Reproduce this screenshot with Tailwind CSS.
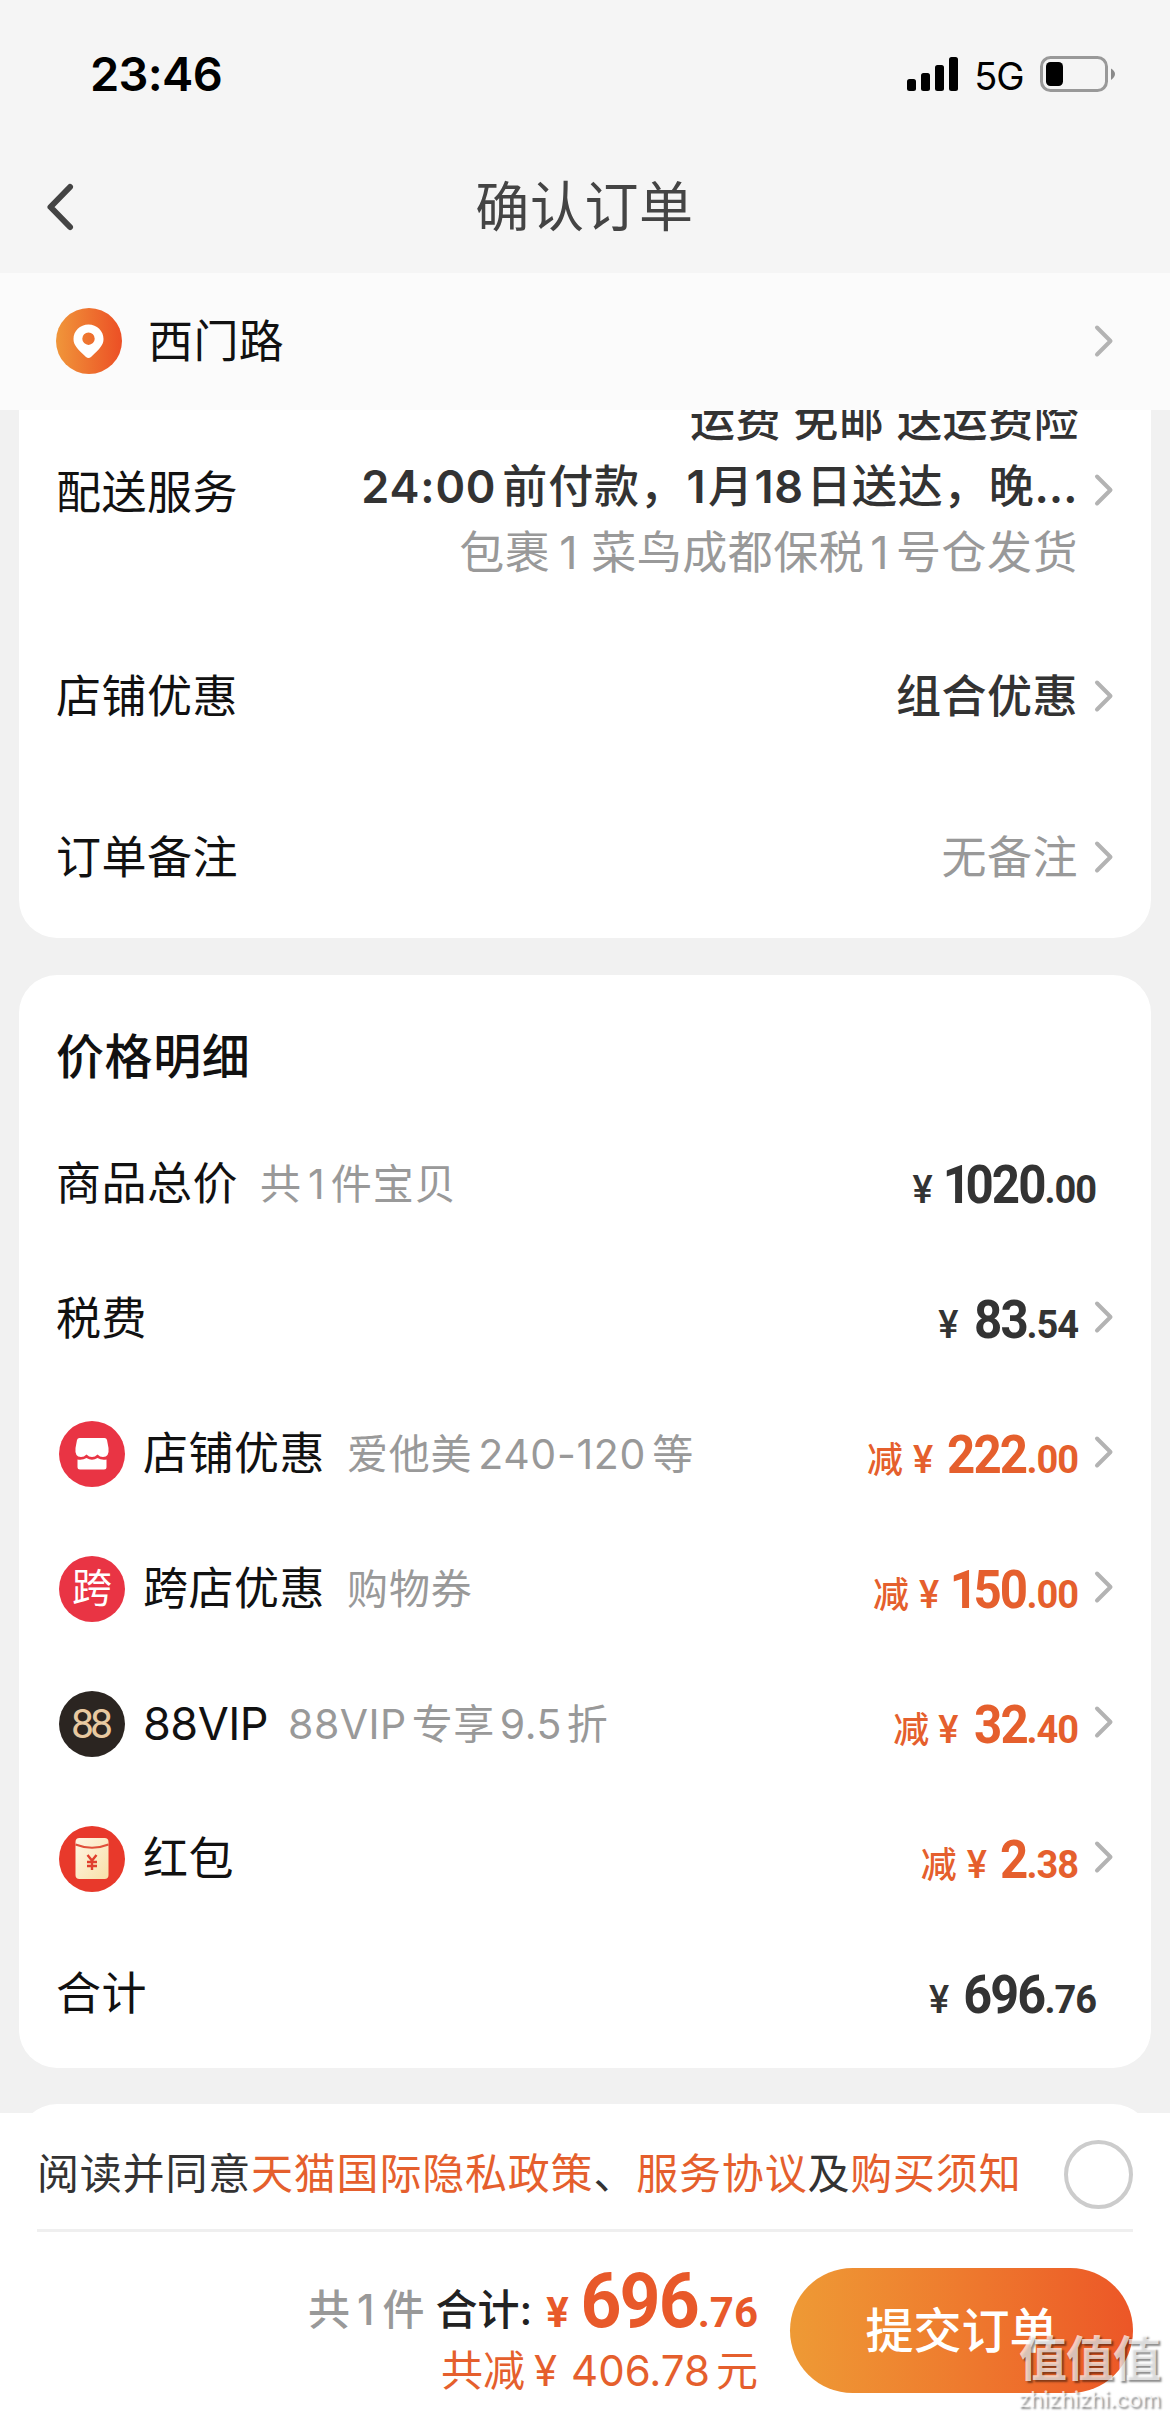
<!DOCTYPE html>
<html lang="zh-CN">
<head>
<meta charset="utf-8">
<title>确认订单</title>
<script src="https://cdn.jsdelivr.net/npm/@tailwindcss/browser@4"></script>
</head>
<body class="bg-[#f1f1f1]">
<svg class="hidden">
  <symbol id="next" viewBox="0 0 20 34"><path d="M3 3.5 L16.5 17 L3 30.5" fill="none" stroke="#b3b3b3" stroke-width="4" stroke-linecap="round" stroke-linejoin="round"/></symbol>
</svg>
<div class="w-[1170px] h-[2415px] overflow-hidden flex flex-col bg-[#f1f1f1] text-[45px] leading-[66px] text-[#111] whitespace-nowrap font-['Inter','Noto_Sans_CJK_SC',sans-serif]">

  <!-- status bar and title -->
  <header class="h-[273px] shrink-0 bg-[#f5f5f5] flex flex-col">
    <div class="h-[148px] flex items-center justify-between pl-[90px] pr-[55px]">
      <div class="text-[47px] font-semibold text-black tracking-[-0.7px]">23:46</div>
      <div class="flex items-center">
        <svg class="w-[51px] h-[34px]" viewBox="0 0 51 34"><rect x="0" y="22" width="9" height="12" rx="2.5"/><rect x="14" y="16" width="9" height="18" rx="2.5"/><rect x="28" y="8" width="9" height="26" rx="2.5"/><rect x="42" y="0" width="9" height="34" rx="2.5"/></svg>
        <div class="w-[82px] text-center text-[38px] text-black pt-[3px] tracking-[-1px]">5G</div>
        <svg class="w-[75px] h-[36px]" viewBox="0 0 75 36"><rect x="1.5" y="1.5" width="65" height="33" rx="9" fill="none" stroke="#999" stroke-width="3"/><rect x="6" y="6" width="17" height="24" rx="4.5"/><path d="M71 12.5 Q75 15 75 18 Q75 21 71 24 Z" fill="#8a8a8a"/></svg>
      </div>
    </div>
    <div class="h-[118px] flex items-center px-[45px]">
      <svg class="w-[30px] h-[50px]" viewBox="0 0 30 50"><path d="M25 5 L5.5 25 L25 45" fill="none" stroke="#444" stroke-width="6" stroke-linecap="round" stroke-linejoin="round"/></svg>
      <h1 class="flex-1 text-center pr-[31px] pt-[2px] text-[54px] tracking-[0.6px] text-[#444]">确认订单</h1>
    </div>
  </header>

  <!-- delivery address -->
  <section class="h-[137px] shrink-0 bg-[#fbfbfb] flex items-center pl-[56px] pr-[56px] pb-[2px]">
    <svg class="w-[66px] h-[66px]" viewBox="0 0 66 66"><defs><linearGradient id="pin" x1="0" y1="0" x2="1" y2="0"><stop offset="0" stop-color="#f0963a"/><stop offset="1" stop-color="#ec4f25"/></linearGradient></defs><circle cx="33" cy="33" r="33" fill="url(#pin)"/><path fill="#fff" fill-rule="evenodd" d="M32.5 16.500C24 16.500 17.500 23 17.500 31C17.500 37 21 40.500 30 49Q32.500 51 35 49C44 40.500 47.500 37 47.500 31C47.500 23 41 16.500 32.500 16.500ZM32.500 24.500a6.200 6.200 0 1 1 0 12.400a6.200 6.200 0 1 1 0-12.400Z"/></svg>
    <div class="ml-[26px] mt-[3px] flex-1 tracking-[0.4px]">西门路</div>
    <svg class="w-[20px] h-[34px]"><use href="#next"/></svg>
  </section>

  <!-- delivery, discount, remark -->
  <section class="h-[528px] shrink-0 mx-[19px] bg-white rounded-b-[38px] overflow-hidden pl-[37px] pr-[37px]">
    <div class="-mt-[24px] h-[198px] flex items-center tracking-[0.5px]">
      <div class="pt-[15px]">配送服务</div>
      <div class="flex-1 mt-[3px] text-right font-medium text-[#333]">
        <div class="mr-[-1px]">运费 免邮 送运费险</div>
        <div class="font-semibold"><span class="tracking-[0.8px]">24:00</span><span class="ml-[6px] font-medium tracking-[0.8px]">前付款，</span><span class="ml-[1px] mr-[2px]">1</span><span class="font-medium">月</span><span class="ml-[1px] mr-[3px]">18</span><span class="font-medium tracking-[0.6px]">日送达，晚</span>…</div>
        <div class="font-normal text-[#999]">包裹<span class="ml-[9px] mr-[13px]">1</span>菜鸟成都保税<span class="ml-[6px] mr-[7px]">1</span>号仓发货</div>
      </div>
      <svg class="ml-[16px] mt-[9px] w-[20px] h-[34px]"><use href="#next"/></svg>
    </div>
    <div class="mt-[31px] h-[161px] flex items-center tracking-[0.5px]">
      <div class="flex-1 mt-[3px]">店铺优惠</div>
      <div class="mt-[3px] font-medium text-[#333]">组合优惠</div>
      <svg class="ml-[16px] w-[20px] h-[34px]"><use href="#next"/></svg>
    </div>
    <div class="h-[161px] flex items-center tracking-[0.5px]">
      <div class="flex-1 mt-[3px]">订单备注</div>
      <div class="mt-[3px] text-[#999]">无备注</div>
      <svg class="ml-[16px] w-[20px] h-[34px]"><use href="#next"/></svg>
    </div>
  </section>

  <!-- price details -->
  <section class="h-[1093px] shrink-0 mt-[37px] mx-[19px] bg-white rounded-[38px] pl-[37px] pr-[37px] pt-[49px]">
    <h2 class="text-[48px] font-medium tracking-[0.6px] h-[92px]">价格明细</h2>

    <div class="h-[135px] flex items-center tracking-[0.5px]">
      <div class="mt-px">商品总价</div>
      <div class="ml-[22px] text-[41px] text-[#999] tracking-[1px]">共<span class="ml-[6px] mr-[5px]">1</span>件宝贝</div>
      <div class="ml-auto mr-[18px] mt-[8px] flex items-baseline text-[#333] font-['Roboto','Noto_Sans_CJK_SC'] font-bold tracking-[-2px]"><span class="text-[38px] font-medium mr-[4px]">¥</span><span class="text-[53px] origin-right scale-x-[0.93]"><span class="mr-[-4px]">1</span>020</span><span class="text-[38px] tracking-[-1px]">.00</span></div>
    </div>

    <div class="h-[135px] flex items-center tracking-[0.5px]">
      <div class="mt-px">税费</div>
      <div class="ml-auto mt-[8px] flex items-baseline text-[#333] font-['Roboto','Noto_Sans_CJK_SC'] font-bold tracking-[-2px]"><span class="text-[38px] font-medium mr-[13px]">¥</span><span class="text-[53px] origin-right scale-x-[0.93]">83</span><span class="text-[38px] tracking-[-1px]">.54</span></div>
      <svg class="ml-[16px] mb-[3px] w-[20px] h-[34px]"><use href="#next"/></svg>
    </div>

    <div class="h-[135px] flex items-center tracking-[0.5px]">
      <svg class="ml-[3px] mr-[18px] w-[66px] h-[66px]" viewBox="0 0 66 66"><circle cx="33" cy="33" r="33" fill="#e93444"/><path fill="#fff" d="M20.500 17H45.500Q47.500 17 48 19L49.500 27Q50.500 36 44 36Q41 36 38.500 33.500Q36 36 33 36Q30 36 27.500 33.500Q25 36 22 36Q15.500 36 16.500 27L18 19Q18.500 17 20.500 17Z"/><path fill="#fff" d="M18.500 38.500Q23.500 39.500 27.500 37Q33 40.500 38.500 37Q42.500 39.500 47.500 38.500V46Q47.500 48.500 45 48.500H21Q18.500 48.500 18.500 46Z"/></svg>
      <div class="mt-px">店铺优惠</div>
      <div class="ml-[22px] text-[41px] text-[#999] tracking-[0.7px]">爱他美<span class="ml-[6px] mr-[6px]">240-120</span>等</div>
      <div class="ml-auto mt-[8px] flex items-baseline text-[#e55f2d] font-['Roboto','Noto_Sans_CJK_SC'] font-bold tracking-[-2px]"><span class="text-[36px] font-medium mr-[12px]">减</span><span class="text-[38px] font-medium mr-[10px]">¥</span><span class="text-[53px] origin-right scale-x-[0.93]">222</span><span class="text-[38px] tracking-[-1px]">.00</span></div>
      <svg class="ml-[16px] mb-[3px] w-[20px] h-[34px]"><use href="#next"/></svg>
    </div>

    <div class="h-[135px] flex items-center tracking-[0.5px]">
      <div class="ml-[3px] mr-[18px] w-[66px] h-[66px] rounded-full bg-[#e93444] text-white text-[40px] text-center leading-[64px] tracking-normal">跨</div>
      <div class="mt-px">跨店优惠</div>
      <div class="ml-[22px] text-[41px] text-[#999] tracking-[0.9px]">购物券</div>
      <div class="ml-auto mt-[8px] flex items-baseline text-[#e55f2d] font-['Roboto','Noto_Sans_CJK_SC'] font-bold tracking-[-2px]"><span class="text-[36px] font-medium mr-[12px]">减</span><span class="text-[38px] font-medium mr-[7px]">¥</span><span class="text-[53px] origin-right scale-x-[0.93]"><span class="mr-[-3px]">1</span>50</span><span class="text-[38px] tracking-[-1px]">.00</span></div>
      <svg class="ml-[16px] mb-[3px] w-[20px] h-[34px]"><use href="#next"/></svg>
    </div>

    <div class="h-[135px] flex items-center tracking-[0.5px]">
      <div class="ml-[3px] mr-[18px] w-[66px] h-[66px] rounded-full bg-[#2b2521] text-[#e8c9a0] font-['Roboto'] font-normal text-[41px] text-center leading-[66px] tracking-[-4px] pr-[4px]">88</div>
      <div class="mt-px tracking-[-0.5px]">88VIP</div>
      <div class="ml-[20px] text-[41px] text-[#999]"><span class="mr-[5px]">88VIP</span>专享<span class="mx-[5px]">9.5</span>折</div>
      <div class="ml-auto mt-[8px] flex items-baseline text-[#e55f2d] font-['Roboto','Noto_Sans_CJK_SC'] font-bold tracking-[-2px]"><span class="text-[36px] font-medium mr-[11px]">减</span><span class="text-[38px] font-medium mr-[13px]">¥</span><span class="text-[53px] origin-right scale-x-[0.93]">32</span><span class="text-[38px] tracking-[-1px]">.40</span></div>
      <svg class="ml-[16px] mb-[3px] w-[20px] h-[34px]"><use href="#next"/></svg>
    </div>

    <div class="h-[135px] flex items-center tracking-[0.5px]">
      <svg class="ml-[3px] mr-[18px] w-[66px] h-[66px]" viewBox="0 0 66 66"><defs><linearGradient id="env" x1="0" y1="0" x2="1" y2="1"><stop offset="0" stop-color="#fff6e4"/><stop offset="1" stop-color="#f8e0a8"/></linearGradient></defs><circle cx="33" cy="33" r="33" fill="#e8392b"/><rect x="16.500" y="12" width="33" height="41" rx="4" fill="url(#env)"/><path d="M16.500 18.500 Q33 25 49.500 18.500" fill="none" stroke="#e0503a" stroke-width="2"/><path d="M28.500 29 L33 34.500 L37.500 29 M33 34.500 V44 M28 36 H38 M28 40 H38" fill="none" stroke="#e0402e" stroke-width="2.400"/></svg>
      <div class="mt-px">红包</div>
      <div class="ml-auto mt-[8px] flex items-baseline text-[#e55f2d] font-['Roboto','Noto_Sans_CJK_SC'] font-bold tracking-[-2px]"><span class="text-[36px] font-medium mr-[12px]">减</span><span class="text-[38px] font-medium mr-[13px]">¥</span><span class="text-[53px] origin-right scale-x-[0.93]">2</span><span class="text-[38px] tracking-[-1px]">.38</span></div>
      <svg class="ml-[16px] mb-[3px] w-[20px] h-[34px]"><use href="#next"/></svg>
    </div>

    <div class="h-[135px] flex items-center tracking-[0.5px]">
      <div class="mt-px">合计</div>
      <div class="ml-auto mr-[18px] mt-[8px] flex items-baseline text-[#333] font-['Roboto','Noto_Sans_CJK_SC'] font-bold tracking-[-2px]"><span class="text-[38px] font-medium mr-[12px]">¥</span><span class="text-[53px] origin-right scale-x-[0.95]">696</span><span class="text-[38px] tracking-[-1px]">.76</span></div>
    </div>
  </section>

  <!-- top edge of the following card -->
  <div class="h-[9px] shrink-0 mt-[36px] mx-[19px] overflow-hidden"><div class="h-[80px] bg-white rounded-[38px]"></div></div>

  <!-- agreement and submit bar -->
  <footer class="relative flex-1 bg-white px-[37px]">
    <div class="h-[119px] flex items-center justify-between border-b-[3px] border-[#efefef]">
      <p class="pt-[5px] text-[42px] tracking-[0.8px] text-[#333]">阅读并同意<span class="text-[#e55f2d]">天猫国际隐私政策</span>、<span class="text-[#e55f2d]">服务协议</span>及<span class="text-[#e55f2d]">购买须知</span></p>
      <div class="mt-[6px] w-[69px] h-[69px] rounded-full border-[4px] border-[#ccc]"></div>
    </div>
    <div class="flex justify-end pt-[36px]">
      <div class="mr-[32px] -mt-[3px] text-right text-[42px]">
        <div class="h-[75px] flex items-baseline justify-end leading-[72px]">
          <span class="font-medium text-[#999] mr-[11px] -translate-y-[2px]">共<span class="ml-[7px] mr-[8px]">1</span>件</span>
          <span class="font-medium text-[#222] -translate-y-[2px]">合计:</span>
          <span class="ml-[14px] text-[#e8592a] font-['Roboto'] font-bold flex items-baseline"><span class="text-[42px] mr-[4px]">¥</span><span class="text-[76px] tracking-[-2px] origin-right scale-x-[0.94]">696</span><span class="text-[42px]">.76</span></span>
        </div>
        <div class="h-[62px] leading-[62px] text-[#e55f2d]">共减<span class="ml-[9px] mr-[14px]">¥</span>406.78<span class="ml-[6px]">元</span></div>
      </div>
      <div class="w-[343px] h-[125px] rounded-full bg-linear-to-r from-[#ee9a35] to-[#ec5627] text-white text-[48px] font-medium text-center leading-[126px]">提交订单</div>
    </div>
    <!-- site watermark -->
    <div class="absolute left-[1018px] top-[218px] text-center text-white/70 [text-shadow:2px_2px_2px_rgba(0,0,0,0.45)]">
      <div class="text-[48px] font-bold leading-[56px] tracking-[-1px]">值值值</div>
      <div class="text-[22px] leading-[24px]">zhizhizhi.com</div>
    </div>
  </footer>
</div>
</body>
</html>
